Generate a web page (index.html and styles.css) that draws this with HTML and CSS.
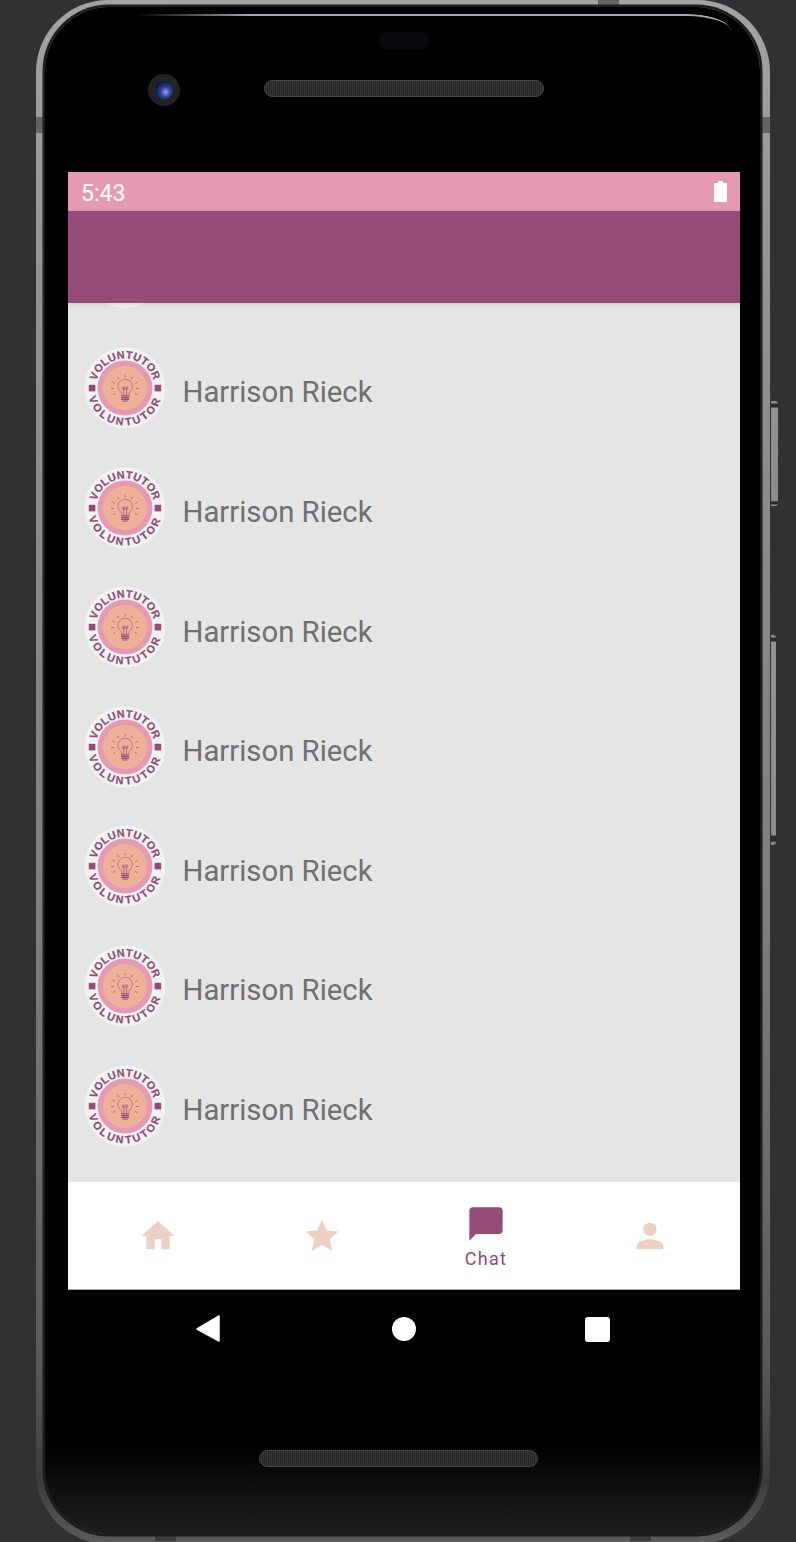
FILE: index.html
```html
<!DOCTYPE html>
<html lang="en">
<head>
<meta charset="utf-8">
<title>Chat</title>
<link rel="stylesheet" href="styles.css">
</head>
<body>
<svg class="defs" width="0" height="0" aria-hidden="true">
  <defs>
    <path id="arcTop" d="M10.500 40A29.500 29.500 0 0 1 69.500 40" fill="none"/>
    <path id="arcBot" d="M2.500 40A37.500 37.500 0 0 0 77.500 40" fill="none"/>
    <g id="logoArt">
      <circle cx="40" cy="40" r="40.5" fill="#eff3f2"/>
      <circle cx="40" cy="40" r="27.5" fill="#e59ab4"/>
      <circle cx="40" cy="40" r="22" fill="#eeb198"/>
      <rect x="3.800" y="36.800" width="6.600" height="6.600" fill="#924c77"/>
      <rect x="69.600" y="36.800" width="6.600" height="6.600" fill="#924c77"/>
      <g fill="none" stroke="#924c77" stroke-linecap="round">
        <path stroke-width=".55" d="M36.500 47.500v-1.800c0-2-3.600-3.200-3.600-8.200a7.400 7.400 0 0 1 14.600 0c0 5-3.600 6.200-3.600 8.200v1.800" />
        <path stroke-width=".7" d="M38 41c-1.600-2.400 1.500-3 2.200-.6c.7-2.400 3.800-1.800 2.200.6h-4.400zM38.800 41v6M41.600 41v6"/>
        <path stroke-width="1.200" d="M36.600 47.800h7M36.600 49.600h7M36.600 51.400h7M37.800 53h4.600"/>
        <path stroke-width=".65" d="M40 27.300v2M32.800 29.200l1 1.700M47.300 29.200l-1 1.700M27.700 34.300l1.800 1M52.500 34.300l-1.800 1M26.500 40.500h2M53.500 40.500h-2M28.200 46.500l1.800-1M52 46.500l-1.800-1"/>
      </g>
    </g>
  </defs>
</svg>

<div class="device">
  <span class="side-btn side-btn-upper"></span>
  <span class="side-btn side-btn-lower"></span>
  <span class="band band-left"></span>
  <span class="band band-right"></span>
  <span class="band-h band-top-a"></span>
  <span class="band-h band-bottom-a"></span>
  <span class="band-h band-bottom-b"></span>
  <div class="bezel">
    <span class="glare"></span>
    <div class="bezel-top">
      <div class="sensor"></div>
      <div class="earpiece-row">
        <div class="camera"><span class="lens"></span></div>
        <div class="speaker"></div>
      </div>
    </div>

    <main class="screen">
      <div class="status-bar">
        <span class="clock">5:43</span>
        <svg class="battery" viewBox="0 0 13 21"><path d="M4 0h5v2h3a1 1 0 0 1 1 1v17a1 1 0 0 1-1 1H1a1 1 0 0 1-1-1V3a1 1 0 0 1 1-1h3z" fill="#fff"/></svg>
      </div>
      <header class="app-bar"></header>
      <section class="list">
        <div class="rows">
          <div class="row"><span class="avatar avatar-peek"></span></div>
          <div class="row"><svg class="avatar" viewBox="0 0 80 80"><use href="#logoArt"/><text class="logo-text"><textPath href="#arcTop" startOffset="50%" text-anchor="middle" letter-spacing=".3">VOLUNTUTOR</textPath></text><text class="logo-text"><textPath href="#arcBot" startOffset="50%" text-anchor="middle" letter-spacing="2.3">VOLUNTUTOR</textPath></text></svg><span class="name">Harrison Rieck</span></div>
          <div class="row"><svg class="avatar" viewBox="0 0 80 80"><use href="#logoArt"/><text class="logo-text"><textPath href="#arcTop" startOffset="50%" text-anchor="middle" letter-spacing=".3">VOLUNTUTOR</textPath></text><text class="logo-text"><textPath href="#arcBot" startOffset="50%" text-anchor="middle" letter-spacing="2.3">VOLUNTUTOR</textPath></text></svg><span class="name">Harrison Rieck</span></div>
          <div class="row"><svg class="avatar" viewBox="0 0 80 80"><use href="#logoArt"/><text class="logo-text"><textPath href="#arcTop" startOffset="50%" text-anchor="middle" letter-spacing=".3">VOLUNTUTOR</textPath></text><text class="logo-text"><textPath href="#arcBot" startOffset="50%" text-anchor="middle" letter-spacing="2.3">VOLUNTUTOR</textPath></text></svg><span class="name">Harrison Rieck</span></div>
          <div class="row"><svg class="avatar" viewBox="0 0 80 80"><use href="#logoArt"/><text class="logo-text"><textPath href="#arcTop" startOffset="50%" text-anchor="middle" letter-spacing=".3">VOLUNTUTOR</textPath></text><text class="logo-text"><textPath href="#arcBot" startOffset="50%" text-anchor="middle" letter-spacing="2.3">VOLUNTUTOR</textPath></text></svg><span class="name">Harrison Rieck</span></div>
          <div class="row"><svg class="avatar" viewBox="0 0 80 80"><use href="#logoArt"/><text class="logo-text"><textPath href="#arcTop" startOffset="50%" text-anchor="middle" letter-spacing=".3">VOLUNTUTOR</textPath></text><text class="logo-text"><textPath href="#arcBot" startOffset="50%" text-anchor="middle" letter-spacing="2.3">VOLUNTUTOR</textPath></text></svg><span class="name">Harrison Rieck</span></div>
          <div class="row"><svg class="avatar" viewBox="0 0 80 80"><use href="#logoArt"/><text class="logo-text"><textPath href="#arcTop" startOffset="50%" text-anchor="middle" letter-spacing=".3">VOLUNTUTOR</textPath></text><text class="logo-text"><textPath href="#arcBot" startOffset="50%" text-anchor="middle" letter-spacing="2.3">VOLUNTUTOR</textPath></text></svg><span class="name">Harrison Rieck</span></div>
          <div class="row"><svg class="avatar" viewBox="0 0 80 80"><use href="#logoArt"/><text class="logo-text"><textPath href="#arcTop" startOffset="50%" text-anchor="middle" letter-spacing=".3">VOLUNTUTOR</textPath></text><text class="logo-text"><textPath href="#arcBot" startOffset="50%" text-anchor="middle" letter-spacing="2.3">VOLUNTUTOR</textPath></text></svg><span class="name">Harrison Rieck</span></div>
        </div>
      </section>
      <nav class="tabs">
        <div class="tab">
          <svg class="tab-icon" viewBox="0 0 24 24"><path d="M10 20v-6h4v6h5v-8h3L12 3 2 12h3v8z"/></svg>
        </div>
        <div class="tab">
          <svg class="tab-icon" viewBox="0 0 24 24"><path d="M12 17.270L18.180 21l-1.640-7.030L22 9.240l-7.190-.61L12 2 9.190 8.630 2 9.240l5.460 4.730L5.820 21z"/></svg>
        </div>
        <div class="tab tab-active">
          <svg class="tab-icon" viewBox="0 0 24 24"><path d="M20 2H4c-1.100 0-2 .9-2 2v18l4-4h14c1.100 0 2-.9 2-2V4c0-1.100-.9-2-2-2z"/></svg>
          <span class="tab-label">Chat</span>
        </div>
        <div class="tab">
          <svg class="tab-icon" viewBox="0 0 24 24"><path d="M12 12c2.210 0 4-1.790 4-4s-1.790-4-4-4-4 1.790-4 4 1.790 4 4 4zm0 2c-2.670 0-8 1.340-8 4v2h16v-2c0-2.660-5.330-4-8-4z"/></svg>
        </div>
      </nav>
    </main>

    <div class="sys-nav">
      <svg class="sys-back" viewBox="0 0 24 27"><path d="M23 1v25L1 14z" fill="#fff" stroke="#fff" stroke-width="1.500" stroke-linejoin="round"/></svg>
      <span class="sys-home"></span>
      <span class="sys-recent"></span>
    </div>
    <div class="speaker speaker-bottom"></div>
  </div>
</div>
</body>
</html>
```

FILE: styles.css
```css
* { box-sizing: border-box; }

html, body {
  margin: 0;
  height: 1542px;
  overflow: hidden;
  background: #2f3133;
  font-family: Roboto, "Liberation Sans", sans-serif;
}

.defs { display: block; height: 0; }

.logo-text {
  font-family: "Liberation Sans", Arial, sans-serif;
  font-weight: 700;
  font-size: 10.8px;
  fill: #924c77;
  stroke: #924c77;
  stroke-width: .2px;
}

.device {
  position: relative;
  width: 734px;
  height: 1544px;
  margin-left: 36px;
  padding: 7px 10px 7px 9px;
  border-radius: 72px;
  background: linear-gradient(180deg, #a2a4a4 0, #909292 20%, #7c7e7e 60%, #5a5a5a 88%, #3c3c3c 96%, #5c5c5c 100%);
}

.side-btn {
  position: absolute;
  left: 735px;
  border-radius: 0 3px 3px 0;
  background: linear-gradient(180deg, #8c8e8e 0, #8c8e8e 2px, #2a2a2a 3px, #2a2a2a 6px, #8f9292 7px, #8a8c8c 95%, #2a2a2a 96%, #2a2a2a 98%, #8c8e8e 99%);
}
.side-btn-upper { top: 401px; width: 7px; height: 105px; }
.side-btn-lower { top: 635px; width: 5px; height: 210px; }

.band { position: absolute; top: 117px; width: 10px; height: 16px; background: #636565; }
.band-left { left: 0; }
.band-right { right: 0; }
.band-h { position: absolute; width: 21px; height: 6px; background: #636565; }
.band-top-a { top: 0; left: 562px; }
.band-bottom-a { top: 1535px; left: 119px; background: #3c3c3c; }
.band-bottom-b { top: 1535px; left: 594px; background: #3c3c3c; }

.bezel {
  position: relative;
  height: 1527px;
  padding-left: 23px;
  border-radius: 64px;
  background: linear-gradient(180deg, #000 0, #000 94%, #1e1e1e 100%);
  box-shadow: 0 0 0 2.500px #1c1d1d;
}

.glare {
  position: absolute;
  top: 7px;
  left: 90px;
  right: 29px;
  height: 17px;
  border-top: 2px solid #a3aeb0;
  border-top-right-radius: 45px 17px;
  -webkit-mask-image: linear-gradient(90deg, transparent 0, #000 20%);
  mask-image: linear-gradient(90deg, transparent 0, #000 20%);
}

.bezel-top {
  display: flex;
  flex-direction: column;
  align-items: center;
  width: 672px;
  height: 165px;
  padding-top: 25px;
}

.sensor {
  width: 50px;
  height: 17px;
  border-radius: 9px;
  background: #090a0f;
}

.earpiece-row {
  position: relative;
  display: flex;
  justify-content: center;
  width: 100%;
  margin-top: 31px;
}

.camera {
  position: absolute;
  left: 80px;
  top: -6px;
  width: 32px;
  height: 32px;
  display: flex;
  align-items: center;
  justify-content: center;
  border-radius: 50%;
  background: #232325;
}
.lens {
  width: 18px;
  height: 18px;
  border-radius: 50%;
  background: radial-gradient(circle at 60% 62%, #8aa6ee 0, #30489f 30%, #0a1030 75%);
}

.speaker {
  width: 280px;
  height: 17px;
  border-radius: 9px;
  border: 1.500px solid #484948;
  background: repeating-linear-gradient(90deg, #262624 0, #262624 1px, #353532 1px, #353532 2px);
}
.speaker-bottom {
  margin-left: 191px;
  margin-top: 82px;
  width: 279px;
}

.screen {
  display: flex;
  flex-direction: column;
  width: 672px;
  height: 1118px;
}

.status-bar {
  display: flex;
  align-items: center;
  justify-content: space-between;
  flex: 0 0 39px;
  padding: 0 13px;
  background: #e49ab2;
  color: #fff;
}
.clock { padding-top: 4px; font-size: 23px; line-height: 1; }
.battery { width: 13px; height: 21px; }

.app-bar {
  position: relative;
  z-index: 1;
  flex: 0 0 92px;
  background: #924c77;
  box-shadow: 0 1px 5px rgba(0, 0, 0, .12);
}

.list {
  flex: 1 1 auto;
  min-height: 0;
  overflow: hidden;
  background: #e5e5e5;
}
.rows { margin-top: -94.400px; }
.row {
  display: flex;
  align-items: center;
  gap: 18px;
  height: 119.600px;
  padding-left: 16.500px;
}
.avatar { display: block; flex: 0 0 80px; width: 80px; height: 80px; overflow: visible; }
.avatar-peek { border-radius: 50%; background: #eff3f2; }
.name { padding-top: 10px; font-size: 29.300px; line-height: 1; color: #707070; }

.tabs {
  position: relative;
  z-index: 1;
  display: flex;
  flex: 0 0 108px;
  padding: 0 8px;
  background: #fff;
  border-bottom: 1px solid #a8a8a8;
}
.tab {
  flex: 1 1 0;
  display: flex;
  flex-direction: column;
  align-items: center;
  justify-content: center;
  fill: #eecfc4;
}
.tab-icon { display: block; width: 40px; height: 40px; }
.tab-active { fill: #924c77; }
.tab-label {
  height: 24px;
  font-size: 18px;
  line-height: 29px;
  letter-spacing: 1.300px;
  color: #924c77;
}

.sys-nav {
  position: relative;
  display: flex;
  width: 672px;
  height: 78px;
  align-items: center;
  padding-left: 128px;
}
.sys-back { width: 24px; height: 27px; margin-top: -1px; }
.sys-home { width: 24px; height: 24px; margin-left: 172px; border-radius: 50%; background: #fff; }
.sys-recent { width: 25px; height: 25px; margin-left: 169px; border-radius: 3px; background: #fff; }
```
